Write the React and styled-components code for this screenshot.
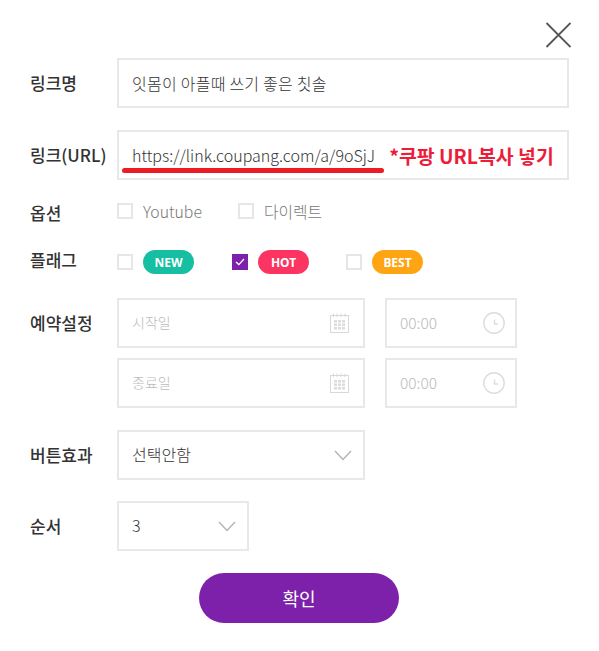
import React from "react";
import styled, { createGlobalStyle } from "styled-components";

const GlobalStyle = createGlobalStyle`
  html, body {
    margin: 0;
    padding: 0;
    background: #fff;
  }
  body {
    font-family: "Noto Sans CJK KR", "Noto Sans", sans-serif;
    color: #333;
  }
`;

function CloseIcon() {
  return (
    <svg width="26" height="26" viewBox="0 0 26 26">
      <path d="M1.5 1L25.5 25M25.5 1L1.5 25" stroke="#555" strokeWidth="1.8" fill="none" />
    </svg>
  );
}

function CalendarIcon() {
  return (
    <svg width="20" height="20" viewBox="0 0 20 20">
      <rect x="1.5" y="2.5" width="18" height="17" fill="#fff" stroke="#d8d8d8" />
      <path d="M4.5 0.5V4M8 0.5V4M12 0.5V4M16 0.5V4" stroke="#d8d8d8" />
      <path
        d="M5 7h3v2.4H5zM9 7h3v2.4H9zM13 7h3v2.4h-3zM5 10.5h3v2.4H5zM9 10.5h3v2.4H9zM13 10.5h3v2.4h-3zM5 14h3v2.4H5zM9 14h3v2.4H9zM13 14h3v2.4h-3z"
        fill="#dcdcdc"
      />
    </svg>
  );
}

function ClockIcon() {
  return (
    <svg width="22" height="22" viewBox="0 0 22 22">
      <circle cx="11" cy="11" r="10.2" fill="none" stroke="#ddd" strokeWidth="1.4" />
      <path d="M11.5 7.5V12H15" fill="none" stroke="#ddd" strokeWidth="1.4" />
    </svg>
  );
}

function Chevron() {
  return (
    <svg width="18" height="11" viewBox="0 0 18 11">
      <path d="M1 1L9 9.5L17 1" fill="none" stroke="#b5b5b5" strokeWidth="1.5" />
    </svg>
  );
}

function CheckMark() {
  return (
    <svg width="10" height="8" viewBox="0 0 10 8">
      <path d="M1 4L3.8 6.6L9 1" fill="none" stroke="#fff" strokeWidth="1.3" />
    </svg>
  );
}

function App() {
  return (
    <Page>
      <GlobalStyle />
      <Header>
        <CloseButton>
          <CloseIcon />
        </CloseButton>
      </Header>

      <Row>
        <Label>링크명</Label>
        <Field>
          <Value $spacing={0.25}>잇몸이 아플때 쓰기 좋은 칫솔</Value>
        </Field>
      </Row>

      <Row $top={22}>
        <Label>링크(URL)</Label>
        <Field>
          <Value>https://link.coupang.com/a/9oSjJ</Value>
          <Note>*쿠팡 URL복사 넣기</Note>
          <Underline />
        </Field>
      </Row>

      <CheckRow $top={23}>
        <Label $shift={2}>옵션</Label>
        <CheckItem $width={121}>
          <Box />
          <CheckText>Youtube</CheckText>
        </CheckItem>
        <CheckItem>
          <Box />
          <CheckText>다이렉트</CheckText>
        </CheckItem>
      </CheckRow>

      <FlagRow>
        <Label $shift={-2}>플래그</Label>
        <CheckItem $width={115}>
          <Box />
          <Pill $color="#16bfa1">NEW</Pill>
        </CheckItem>
        <CheckItem $width={114}>
          <Box $checked>
            <CheckMark />
          </Box>
          <Pill $color="#fb3461">HOT</Pill>
        </CheckItem>
        <CheckItem>
          <Box />
          <Pill $color="#ffa412">BEST</Pill>
        </CheckItem>
      </FlagRow>

      <ScheduleRow>
        <Label>예약설정</Label>
        <ScheduleGrid>
          <DateField>
            <Placeholder>시작일</Placeholder>
            <CalendarIcon />
          </DateField>
          <TimeField>
            <TimeText>00:00</TimeText>
            <ClockIcon />
          </TimeField>
          <DateField>
            <Placeholder>종료일</Placeholder>
            <CalendarIcon />
          </DateField>
          <TimeField>
            <TimeText>00:00</TimeText>
            <ClockIcon />
          </TimeField>
        </ScheduleGrid>
      </ScheduleRow>

      <Row $top={22}>
        <Label>버튼효과</Label>
        <Select $width={248}>
          <SelectValue>선택안함</SelectValue>
          <Chevron />
        </Select>
      </Row>

      <Row $top={21}>
        <Label>순서</Label>
        <Select $width={132}>
          <SelectValue>3</SelectValue>
          <Chevron />
        </Select>
      </Row>

      <Footer>
        <Confirm>확인</Confirm>
      </Footer>
    </Page>
  );
}

export default App;

const Page = styled.div`
  width: 599px;
  height: 651px;
  box-sizing: border-box;
  padding: 22px 30px 0;
  overflow: hidden;
`;

const Header = styled.div`
  display: flex;
  justify-content: flex-end;
  height: 36px;
`;

const CloseButton = styled.div`
  width: 26px;
  height: 26px;
  margin-right: -2px;
`;

const Row = styled.div`
  display: flex;
  align-items: center;
  margin-top: ${(p) => p.$top || 0}px;
`;

const Label = styled.div`
  flex: 0 0 87px;
  font-size: 17px;
  font-weight: 500;
  line-height: 50px;
  color: #333;
  white-space: nowrap;
  transform: translateY(${(p) => p.$shift || 0}px);
`;

const Field = styled.div`
  position: relative;
  flex: 1;
  height: 50px;
  box-sizing: border-box;
  border: 2px solid #e8e8e8;
  padding: 0 13px;
  display: flex;
  align-items: center;
`;

const Value = styled.span`
  font-size: 16px;
  font-weight: 300;
  letter-spacing: ${(p) => p.$spacing || 0}px;
  color: #333;
  white-space: nowrap;
`;

const SelectValue = styled(Value)`
  padding-bottom: 2px;
`;

const Note = styled.span`
  margin-left: 14px;
  font-size: 19.4px;
  font-weight: 700;
  color: #ed1c3a;
  white-space: nowrap;
`;

const Underline = styled.div`
  position: absolute;
  left: 3px;
  top: 36px;
  width: 262px;
  height: 5px;
  border-radius: 3px;
  background: #ed1c24;
`;

const CheckRow = styled.div`
  display: flex;
  align-items: center;
  height: 16px;
  margin-top: ${(p) => p.$top || 0}px;
`;

const FlagRow = styled.div`
  display: flex;
  align-items: center;
  height: 24px;
  margin-top: 31px;
`;

const CheckItem = styled.div`
  display: flex;
  align-items: center;
  flex: 0 0 ${(p) => (p.$width ? `${p.$width}px` : "auto")};
`;

const Box = styled.div`
  width: 16px;
  height: 16px;
  box-sizing: border-box;
  border: ${(p) => (p.$checked ? "none" : "2px solid #e6e6e6")};
  background: ${(p) => (p.$checked ? "#7d21ab" : "#fff")};
  display: flex;
  align-items: center;
  justify-content: center;
`;

const CheckText = styled.span`
  margin-left: 10px;
  font-size: 15.8px;
  font-weight: 300;
  color: #777;
  white-space: nowrap;
`;

const Pill = styled.span`
  margin-left: 10px;
  width: 51px;
  height: 24px;
  border-radius: 12px;
  background: ${(p) => p.$color};
  color: #fff;
  font-size: 12px;
  font-weight: 700;
  font-family: "Noto Sans", sans-serif;
  display: flex;
  align-items: center;
  justify-content: center;
`;

const ScheduleRow = styled.div`
  display: flex;
  align-items: flex-start;
  margin-top: 24px;
`;

const ScheduleGrid = styled.div`
  display: grid;
  grid-template-columns: 248px 132px;
  column-gap: 20px;
  row-gap: 10px;
`;

const DateField = styled.div`
  height: 50px;
  box-sizing: border-box;
  border: 2px solid #e8e8e8;
  padding: 0 14px 0 13px;
  display: flex;
  align-items: center;
  justify-content: space-between;
`;

const TimeField = styled(DateField)`
  padding: 0 10px 0 13px;
`;

const Placeholder = styled.span`
  font-size: 14px;
  font-weight: 300;
  color: #bbb;
  padding-bottom: 2px;
`;

const TimeText = styled(Placeholder)`
  font-size: 15.5px;
`;

const Select = styled.div`
  width: ${(p) => p.$width}px;
  height: 50px;
  box-sizing: border-box;
  border: 2px solid #e8e8e8;
  padding: 0 11px 0 13px;
  display: flex;
  align-items: center;
  justify-content: space-between;
`;

const Footer = styled.div`
  display: flex;
  justify-content: center;
  margin-top: 22px;
  padding-right: 1px;
`;

const Confirm = styled.button`
  width: 200px;
  height: 50px;
  border: none;
  border-radius: 25px;
  background: #7d21ab;
  color: #fff;
  font-family: inherit;
  font-size: 18px;
  cursor: pointer;
`;
